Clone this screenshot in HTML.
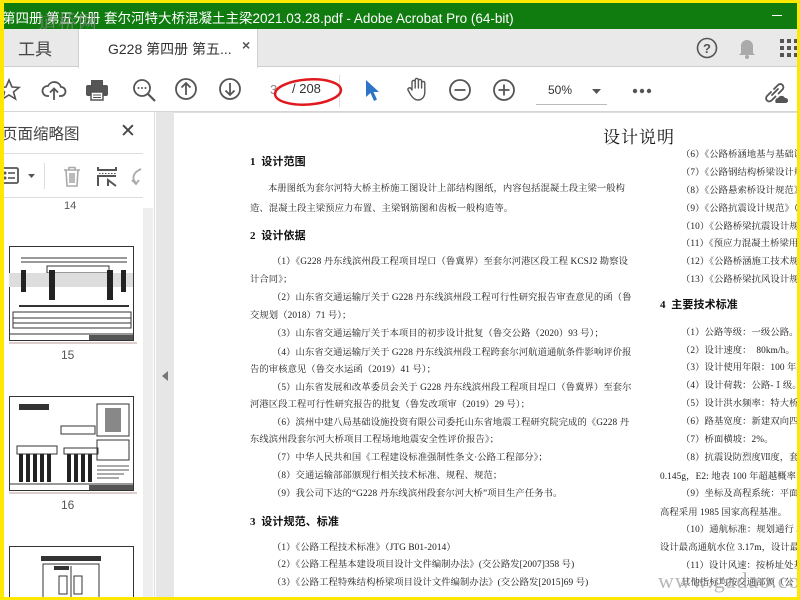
<!DOCTYPE html>
<html><head><meta charset="utf-8"><style>
*{margin:0;padding:0;box-sizing:border-box}
body{width:800px;height:600px;overflow:hidden;background:#ffe800;font-family:"Liberation Sans","Noto Sans CJK SC",sans-serif;position:relative}
.a{position:absolute}
#win{position:absolute;left:4px;top:3px;width:793px;height:594px;background:#fff;overflow:hidden}
.t{position:absolute;white-space:nowrap;font-family:"Liberation Serif","Noto Serif CJK SC",serif;font-size:9.3px;color:#1a1a1a;letter-spacing:0.1px;line-height:12px}
.h{font-family:"Liberation Serif","Noto Sans CJK SC",serif;font-size:11px;font-weight:bold;color:#111}
svg{position:absolute;overflow:visible}
</style></head><body>
<div id="win">
 <div class="a" style="left:0;top:0;width:793px;height:26px;background:#107c10"></div>
 <div class="a" style="left:-2px;top:4px;color:#fff;font-size:13.5px;white-space:nowrap;font-family:'Liberation Sans','Noto Sans CJK SC',sans-serif">第四册 第五分册 套尔河特大桥混凝土主梁2021.03.28.pdf - Adobe Acrobat Pro (64-bit)</div>
 <div class="a" style="left:34px;top:5px;color:#8a8a8a;font-size:19px;font-family:'Noto Serif CJK SC',serif;opacity:.8;letter-spacing:1px">道桥网</div>
 <div class="a" style="left:768px;top:12px;width:10px;height:1px;background:#fff"></div>
 <div class="a" style="left:0;top:26px;width:793px;height:38px;background:#e9e9e9;border-bottom:1px solid #cfcfcf"></div>
 <div class="a" style="left:14px;top:32px;font-size:17px;color:#444">工具</div>
 <div class="a" style="left:74px;top:26px;width:180px;height:39px;background:#fff;border-left:1px solid #d0d0d0;border-right:1px solid #d0d0d0"></div>
 <div class="a" style="left:104px;top:36px;font-size:14px;color:#333;white-space:nowrap">G228 第四册 第五...</div>
 <div class="a" style="left:238px;top:34px;font-size:14px;color:#555;font-weight:bold">×</div>
 <svg style="left:692px;top:34px" width="24" height="24"><circle cx="11" cy="11" r="9.5" fill="none" stroke="#555" stroke-width="1.6"/><text x="11" y="16" font-size="13" text-anchor="middle" fill="#555" font-weight="bold" font-family="Liberation Sans">?</text></svg>
 <svg style="left:733px;top:34px" width="20" height="22"><path d="M4 16 V9 a6 6 0 0 1 12 0 V16 l2 2 H2 z" fill="#aaa"/><circle cx="10" cy="20" r="2" fill="#aaa"/></svg>
 <svg style="left:776px;top:36px" width="20" height="20" fill="#555"><rect x="0" y="0" width="4" height="4"/><rect x="7" y="0" width="4" height="4"/><rect x="14" y="0" width="4" height="4"/><rect x="0" y="7" width="4" height="4"/><rect x="7" y="7" width="4" height="4"/><rect x="14" y="7" width="4" height="4"/><rect x="0" y="14" width="4" height="4"/><rect x="7" y="14" width="4" height="4"/><rect x="14" y="14" width="4" height="4"/></svg>
 <div class="a" style="left:0;top:108px;width:793px;height:1px;background:#d5d5d5"></div>
 <svg style="left:-6px;top:75px" width="24" height="24"><path d="M11 2 L14 9 L21 9.5 L15.5 14 L17.5 21 L11 17 L4.5 21 L6.5 14 L1 9.5 L8 9 Z" fill="none" stroke="#555" stroke-width="1.6"/></svg>
 <svg style="left:38px;top:76px" width="26" height="24"><path d="M7 17 H5 a5 5 0 0 1 1 -10 a7 7 0 0 1 13 1 a4.5 4.5 0 0 1 0 9 H17" fill="none" stroke="#555" stroke-width="1.8"/><path d="M12 21 V10 M8 13.5 L12 9.5 L16 13.5" fill="none" stroke="#555" stroke-width="1.8"/></svg>
 <svg style="left:82px;top:77px" width="24" height="22"><rect x="5" y="0" width="12" height="5" fill="#555"/><rect x="0" y="5" width="22" height="11" rx="2" fill="#555"/><rect x="5" y="12" width="12" height="8" fill="#fff" stroke="#555" stroke-width="1.5"/><line x1="7" y1="15" x2="15" y2="15" stroke="#555"/><line x1="7" y1="17.5" x2="15" y2="17.5" stroke="#555"/></svg>
 <svg style="left:128px;top:75px" width="26" height="26"><circle cx="10" cy="10" r="8" fill="none" stroke="#555" stroke-width="1.8"/><line x1="16" y1="16" x2="23" y2="23" stroke="#555" stroke-width="2.2"/><circle cx="6.5" cy="10" r="1" fill="#555"/><circle cx="10" cy="10" r="1" fill="#555"/><circle cx="13.5" cy="10" r="1" fill="#555"/></svg>
 <svg style="left:171px;top:75px" width="24" height="24"><circle cx="11" cy="11" r="10" fill="none" stroke="#555" stroke-width="1.8"/><path d="M11 17 V5 M6.5 9.5 L11 5 L15.5 9.5" fill="none" stroke="#555" stroke-width="1.8"/></svg>
 <svg style="left:215px;top:75px" width="24" height="24"><circle cx="11" cy="11" r="10" fill="none" stroke="#555" stroke-width="1.8"/><path d="M11 5 V17 M6.5 12.5 L11 17 L15.5 12.5" fill="none" stroke="#555" stroke-width="1.8"/></svg>
 <div class="a" style="left:266px;top:79px;font-size:13px;color:#888">3</div>
 <div class="a" style="left:288px;top:78px;font-size:13px;color:#333">/ 208</div>
 <div class="a" style="left:335px;top:72px;width:1px;height:32px;background:#ddd"></div>
 <svg style="left:270px;top:72px" width="80" height="36"><ellipse cx="34" cy="17" rx="33" ry="12.5" transform="rotate(-4 34 17)" fill="none" stroke="#e0191e" stroke-width="2.5"/></svg>
 <svg style="left:361px;top:76px" width="18" height="26"><path d="M1 1 L1 18 L5.5 14 L9 22 L12 20.5 L8.5 13 L14 13 Z" fill="#2e73c7"/></svg>
 <svg style="left:402px;top:74px" width="24" height="26"><path d="M6 13 V5 a1.6 1.6 0 0 1 3.2 0 V11 V3 a1.6 1.6 0 0 1 3.2 0 V11 V4 a1.6 1.6 0 0 1 3.2 0 V11 V6 a1.6 1.6 0 0 1 3.2 0 V15 c0 5 -3 8 -7 8 c-3 0 -5 -2 -7 -5 L2 13 a1.7 1.7 0 0 1 3 -1.5 Z" fill="none" stroke="#555" stroke-width="1.4" stroke-linejoin="round"/></svg>
 <svg style="left:445px;top:76px" width="24" height="24"><circle cx="11" cy="11" r="10" fill="none" stroke="#555" stroke-width="1.8"/><line x1="5.5" y1="11" x2="16.5" y2="11" stroke="#555" stroke-width="1.8"/></svg>
 <svg style="left:489px;top:76px" width="24" height="24"><circle cx="11" cy="11" r="10" fill="none" stroke="#555" stroke-width="1.8"/><path d="M5.5 11 H16.5 M11 5.5 V16.5" stroke="#555" stroke-width="1.8"/></svg>
 <div class="a" style="left:544px;top:80px;font-size:12px;color:#333">50%</div>
 <svg style="left:588px;top:86px" width="10" height="6"><path d="M0 0 H9 L4.5 5 Z" fill="#555"/></svg>
 <div class="a" style="left:532px;top:101px;width:71px;height:1px;background:#bbb"></div>
 <svg style="left:628px;top:85px" width="22" height="6" fill="#555"><circle cx="3" cy="3" r="2.2"/><circle cx="10" cy="3" r="2.2"/><circle cx="17" cy="3" r="2.2"/></svg>
 <svg style="left:758px;top:76px" width="28" height="26"><path d="M9 13 L5 17 a3 3 0 0 0 4.5 4.5 L13.5 17.5 M12 10 L16 6 a3 3 0 0 1 4.5 4.5 L16.5 14.5 M10 16 L16 10" fill="none" stroke="#555" stroke-width="1.8" stroke-linecap="round"/><path d="M14 24 a3 3 0 0 1 2 -5 a4 4 0 0 1 7 0 a2.5 2.5 0 0 1 1 5 Z" fill="#555"/></svg>
 <div class="a" style="left:0;top:109px;width:151px;height:485px;background:#fff;border-right:1px solid #ddd"></div>
 <div class="a" style="left:-2px;top:119px;font-size:15.5px;color:#444">页面缩略图</div>
 <div class="a" style="left:116px;top:117px;font-size:19px;color:#444">✕</div>
 <div class="a" style="left:0;top:150px;width:139px;height:1px;background:#ddd"></div>
 <svg style="left:0;top:163px" width="36" height="20"><rect x="-6" y="2" width="20" height="15" rx="1.5" fill="none" stroke="#555" stroke-width="1.8"/><circle cx="1" cy="7" r="1.5" fill="#555"/><circle cx="1" cy="12" r="1.5" fill="#555"/><line x1="4" y1="7" x2="11" y2="7" stroke="#555" stroke-width="1.6"/><line x1="4" y1="12" x2="11" y2="12" stroke="#555" stroke-width="1.6"/><path d="M24 8 H31 L27.5 12 Z" fill="#555"/></svg>
 <div class="a" style="left:40px;top:160px;width:1px;height:26px;background:#ddd"></div>
 <svg style="left:58px;top:163px" width="20" height="22"><path d="M2 4 H18 M7 4 V1.5 H13 V4 M4 4 L5 20 H15 L16 4 M8 7 V17 M10 7 V17 M12 7 V17" fill="none" stroke="#aaa" stroke-width="1.6"/></svg>
 <svg style="left:93px;top:163px" width="22" height="22"><path d="M1 1 V4 H19 V1 M1 20 V10 H19 M11 20 V14 L19 20" fill="none" stroke="#555" stroke-width="2"/><path d="M2 7.5 H19" stroke="#555" stroke-dasharray="1.5 1.5"/></svg>
 <svg style="left:126px;top:164px" width="14" height="20"><path d="M11 2 C2 6 2 12 6 16 M2 13 L6 17 L9 13" fill="none" stroke="#aaa" stroke-width="1.8"/></svg>
 <div class="a" style="left:0;top:194px;width:139px;height:1px;background:#ddd"></div>
 <div class="a" style="left:139px;top:205px;width:10px;height:389px;background:#eee"></div>
 <div class="a" style="left:60px;top:197px;font-size:11px;color:#555">14</div>
 <svg style="left:5px;top:243px" width="128" height="98">
  <rect x=".5" y=".5" width="124" height="94" fill="#fff" stroke="#333"/>
  <line x1="0" y1="97" x2="128" y2="97" stroke="#b99" />
  <line x1="12" y1="12" x2="118" y2="12" stroke="#333"/><line x1="12" y1="16" x2="118" y2="16" stroke="#333"/>
  <rect x="38" y="20" width="62" height="7" fill="none" stroke="#333"/>
  <rect x="0" y="27" width="124" height="14" fill="#ddd"/>
  <rect x="12" y="24" width="5" height="22" fill="#222"/><rect x="40" y="24" width="6" height="30" fill="#222"/><rect x="98" y="24" width="6" height="30" fill="#222"/><rect x="112" y="24" width="5" height="22" fill="#222"/>
  <line x1="10" y1="60" x2="120" y2="60" stroke="#333" stroke-width="2"/>
  <rect x="4" y="66" width="118" height="16" fill="none" stroke="#333"/><line x1="4" y1="72" x2="122" y2="72" stroke="#333"/><line x1="4" y1="77" x2="122" y2="77" stroke="#333"/>
  <line x1="0" y1="88" x2="124" y2="88" stroke="#333"/><rect x="80" y="89" width="44" height="5" fill="#555"/>
 </svg>
 <div class="a" style="left:57px;top:345px;font-size:12px;color:#555">15</div>
 <svg style="left:5px;top:393px" width="128" height="98">
  <rect x=".5" y=".5" width="124" height="94" fill="#fff" stroke="#333"/>
  <line x1="0" y1="97" x2="128" y2="97" stroke="#b99"/>
  <rect x="10" y="8" width="30" height="6" fill="#333"/><rect x="8" y="50" width="40" height="8" fill="none" stroke="#333"/>
  <g fill="#222"><rect x="10" y="58" width="4" height="28"/><rect x="17" y="58" width="4" height="28"/><rect x="24" y="58" width="4" height="28"/><rect x="31" y="58" width="4" height="28"/><rect x="38" y="58" width="4" height="28"/><rect x="58" y="58" width="4" height="28"/><rect x="65" y="58" width="4" height="28"/><rect x="72" y="58" width="4" height="28"/><rect x="79" y="58" width="4" height="28"/></g>
  <rect x="52" y="30" width="34" height="8" fill="none" stroke="#333"/><rect x="55" y="52" width="34" height="6" fill="none" stroke="#333"/>
  <rect x="88" y="8" width="32" height="32" fill="none" stroke="#333"/><rect x="96" y="12" width="16" height="24" fill="#888"/>
  <rect x="88" y="44" width="32" height="20" fill="none" stroke="#333"/>
  <g stroke="#555"><line x1="88" y1="70" x2="120" y2="70"/><line x1="88" y1="74" x2="120" y2="74"/><line x1="88" y1="78" x2="115" y2="78"/><line x1="88" y1="82" x2="110" y2="82"/></g>
  <line x1="0" y1="88" x2="124" y2="88" stroke="#333"/><rect x="80" y="89" width="44" height="5" fill="#555"/>
 </svg>
 <div class="a" style="left:57px;top:495px;font-size:12px;color:#555">16</div>
 <svg style="left:5px;top:543px" width="128" height="60">
  <rect x=".5" y=".5" width="124" height="60" fill="#fff" stroke="#333"/>
  <rect x="32" y="10" width="60" height="5" fill="#333"/><rect x="34" y="18" width="56" height="35" fill="none" stroke="#333"/>
  <rect x="45" y="20" width="15" height="4" fill="#333"/><line x1="62" y1="20" x2="62" y2="52" stroke="#333"/><rect x="50" y="30" width="8" height="18" fill="none" stroke="#333"/><rect x="65" y="30" width="8" height="18" fill="none" stroke="#333"/>
 </svg>
 <div class="a" style="left:152px;top:109px;width:18px;height:485px;background:#e6e6e6"></div>
 <svg style="left:158px;top:368px" width="8" height="12"><path d="M6 0 L0 5 L6 10 Z" fill="#777"/></svg>
 <div class="a" style="left:170px;top:109px;width:623px;height:485px;background:#fff;border-top:1px solid #ddd"></div>
 <div class="a" style="left:599px;top:120px;font-size:17px;color:#111;font-family:'Noto Serif CJK SC',serif;letter-spacing:1px">设计说明</div>

 <div class="t h" style="left:246px;top:153px">1&nbsp;&nbsp;设计范围</div>
 <div class="t" style="left:264px;top:180px">本册图纸为套尔河特大桥主桥施工图设计上部结构图纸，内容包括混凝土段主梁一般构</div>
 <div class="t" style="left:246px;top:200px">造、混凝土段主梁预应力布置、主梁钢筋图和齿板一般构造等。</div>
 <div class="t h" style="left:246px;top:227px">2&nbsp;&nbsp;设计依据</div>
 <div class="t" style="left:268px;top:253px">（1）《G228 丹东线滨州段工程项目埕口（鲁冀界）至套尔河港区段工程 KCSJ2 勘察设</div>
 <div class="t" style="left:246px;top:271px">计合同》；</div>
 <div class="t" style="left:268px;top:289px">（2）山东省交通运输厅关于 G228 丹东线滨州段工程可行性研究报告审查意见的函（鲁</div>
 <div class="t" style="left:246px;top:307px">交规划（2018）71 号）；</div>
 <div class="t" style="left:268px;top:325px">（3）山东省交通运输厅关于本项目的初步设计批复（鲁交公路（2020）93 号）；</div>
 <div class="t" style="left:268px;top:344px">（4）山东省交通运输厅关于 G228 丹东线滨州段工程跨套尔河航道通航条件影响评价报</div>
 <div class="t" style="left:246px;top:361px">告的审核意见（鲁交水运函（2019）41 号）；</div>
 <div class="t" style="left:268px;top:379px">（5）山东省发展和改革委员会关于 G228 丹东线滨州段工程项目埕口（鲁冀界）至套尔</div>
 <div class="t" style="left:246px;top:396px">河港区段工程可行性研究报告的批复（鲁发改项审（2019）29 号）；</div>
 <div class="t" style="left:268px;top:414px">（6）滨州中建八局基础设施投资有限公司委托山东省地震工程研究院完成的《G228 丹</div>
 <div class="t" style="left:246px;top:431px">东线滨州段套尔河大桥项目工程场地地震安全性评价报告》；</div>
 <div class="t" style="left:268px;top:449px">（7）中华人民共和国《工程建设标准强制性条文·公路工程部分》；</div>
 <div class="t" style="left:268px;top:467px">（8）交通运输部部颁现行相关技术标准、规程、规范；</div>
 <div class="t" style="left:268px;top:485px">（9）我公司下达的“G228 丹东线滨州段套尔河大桥”项目生产任务书。</div>
 <div class="t h" style="left:246px;top:513px">3&nbsp;&nbsp;设计规范、标准</div>
 <div class="t" style="left:268px;top:539px">（1）《公路工程技术标准》（JTG B01-2014）</div>
 <div class="t" style="left:268px;top:556px">（2）《公路工程基本建设项目设计文件编制办法》(交公路发[2007]358 号)</div>
 <div class="t" style="left:268px;top:574px">（3）《公路工程特殊结构桥梁项目设计文件编制办法》(交公路发[2015]69 号)</div>

 <div class="t" style="left:677px;top:146px">（6）《公路桥涵地基与基础设计规范》</div>
 <div class="t" style="left:677px;top:164px">（7）《公路钢结构桥梁设计规范》</div>
 <div class="t" style="left:677px;top:182px">（8）《公路悬索桥设计规范》</div>
 <div class="t" style="left:677px;top:200px">（9）《公路抗震设计规范》（JTG</div>
 <div class="t" style="left:677px;top:218px">（10）《公路桥梁抗震设计规范》</div>
 <div class="t" style="left:677px;top:235px">（11）《预应力混凝土桥梁用塑料</div>
 <div class="t" style="left:677px;top:253px">（12）《公路桥涵施工技术规范》</div>
 <div class="t" style="left:677px;top:271px">（13）《公路桥梁抗风设计规范》</div>
 <div class="t h" style="left:656px;top:296px">4&nbsp;&nbsp;主要技术标准</div>
 <div class="t" style="left:677px;top:324px">（1）公路等级：一级公路。</div>
 <div class="t" style="left:677px;top:342px">（2）设计速度：&nbsp;&nbsp;80km/h。</div>
 <div class="t" style="left:677px;top:359px">（3）设计使用年限：100 年。</div>
 <div class="t" style="left:677px;top:377px">（4）设计荷载：公路-Ⅰ级。</div>
 <div class="t" style="left:677px;top:395px">（5）设计洪水频率：特大桥 1/300</div>
 <div class="t" style="left:677px;top:413px">（6）路基宽度：新建双向四车道</div>
 <div class="t" style="left:677px;top:431px">（7）桥面横坡：2%。</div>
 <div class="t" style="left:677px;top:449px">（8）抗震设防烈度Ⅶ度，套尔河</div>
 <div class="t" style="left:656px;top:468px">0.145g，E2: 地表 100 年超越概率</div>
 <div class="t" style="left:677px;top:485px">（9）坐标及高程系统：平面坐标</div>
 <div class="t" style="left:656px;top:504px">高程采用 1985 国家高程基准。</div>
 <div class="t" style="left:677px;top:521px">（10）通航标准：规划通行 3000</div>
 <div class="t" style="left:656px;top:539px">设计最高通航水位 3.17m，设计最低</div>
 <div class="t" style="left:677px;top:557px">（11）设计风速：按桥址处基本风</div>
 <div class="t" style="left:677px;top:574px">其他指标均按交通部颁（公</div>
 <div class="a" style="left:654px;top:565px;font-size:22px;color:#999;opacity:.7;font-family:'Liberation Serif',serif;letter-spacing:1px">www.gadao.com</div>
</div>
</body></html>
